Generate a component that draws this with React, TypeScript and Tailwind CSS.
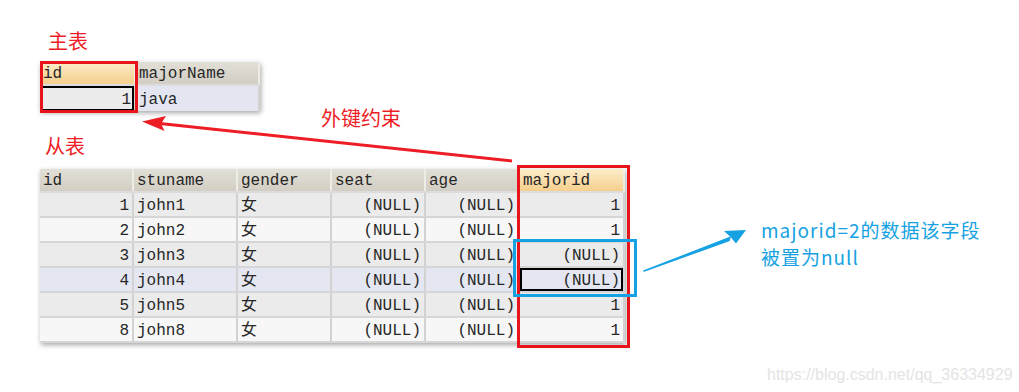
import { ReactElement } from 'react'

const mono = 'font-["Liberation_Mono","Noto_Sans_CJK_SC",monospace]'
const cjk = 'font-["Noto_Sans_CJK_SC","Noto_Sans",sans-serif]'

interface Student {
  id: number
  name: string
  majorid: string
}

const students: Student[] = [
  { id: 1, name: 'john1', majorid: '1' },
  { id: 2, name: 'john2', majorid: '1' },
  { id: 3, name: 'john3', majorid: '(NULL)' },
  { id: 4, name: 'john4', majorid: '(NULL)' },
  { id: 5, name: 'john5', majorid: '1' },
  { id: 8, name: 'john8', majorid: '1' }
]

const headCell = 'h-full flex items-center pt-[2px] px-[3px] border-r-2 border-[#eeece6] bg-gradient-to-b from-[#e2dfd6] to-[#d2cec4]'
const headCellHot = 'h-full flex items-center pt-[2px] px-[3px] border-r-2 border-[#eeece6] bg-gradient-to-b from-[#fcecca] to-[#f6cf8c]'
const cell = 'h-full flex items-center pt-[2px] px-[3px] border-r-2 border-[#d2d2d2]'

function MasterTable(): ReactElement {
  return (
    <div className="relative w-[220px] shadow-[1px_2px_5px_rgba(0,0,0,0.35)] bg-white">
      <div className="flex h-[24px] border-b-2 border-[#dcdcdc]">
        <div className={`${headCellHot} w-[96px]`}>id</div>
        <div className={`${headCell} w-[124px]`}>majorName</div>
      </div>
      <div className="flex h-[25px] bg-[#e3e6f0]">
        <div className={`${cell} w-[96px] justify-end bg-[#ececec] shadow-[inset_0_0_0_2px_#000]`}>1</div>
        <div className={`${cell} w-[124px]`}>java</div>
      </div>
      {/* highlighted primary key column */}
      <div className="absolute left-0 top-[-1px] w-[98px] h-[52px] border-[3px] border-[#e8141c]" />
    </div>
  )
}

function SlaveTable(): ReactElement {
  return (
    <div className="relative w-[585px] shadow-[1px_2px_5px_rgba(0,0,0,0.35)] bg-white">
      <div className="flex h-[24px] border-b-2 border-[#dcdcdc]">
        <div className={`${headCell} w-[94px]`}>id</div>
        <div className={`${headCell} w-[104px]`}>stuname</div>
        <div className={`${headCell} w-[94px]`}>gender</div>
        <div className={`${headCell} w-[94px]`}>seat</div>
        <div className={`${headCell} w-[94px]`}>age</div>
        <div className={`${headCellHot} w-[105px]`}>majorid</div>
      </div>
      {students.map((s, idx) => {
        const bg = s.id === 4 ? 'bg-[#e4e7f1]' : idx % 2 === 0 ? 'bg-[#ebebeb]' : 'bg-[#f7f7f7]'
        return (
          <div key={s.id} className={`flex h-[25px] border-b-2 border-[#d6d6d6] ${bg}`}>
            <div className={`${cell} w-[94px] justify-end`}>{s.id}</div>
            <div className={`${cell} w-[104px]`}>{s.name}</div>
            <div className={`${cell} w-[94px]`}>女</div>
            <div className={`${cell} w-[94px] justify-end`}>(NULL)</div>
            <div className={`${cell} w-[94px] justify-end`}>(NULL)</div>
            <div className={`${cell} w-[105px] justify-end ${s.id === 4 ? 'shadow-[inset_0_0_0_2px_#000]' : ''}`}>{s.majorid}</div>
          </div>
        )
      })}
      {/* foreign key column */}
      <div className="absolute left-[477px] top-[-4px] w-[113px] h-[183px] border-[3px] border-[#e8141c]" />
      {/* rows set to null */}
      <div className="absolute left-[473px] top-[70px] w-[124px] h-[58px] border-[3px] border-[#16a2e2]" />
    </div>
  )
}

export default function App(): ReactElement {
  return (
    <div className="relative w-[1019px] h-[392px] bg-white overflow-hidden">
      <div className={`flex flex-col pl-[40px] text-[16px] text-[#262626] ${mono}`}>
        <div className={`mt-[27px] ml-[8px] h-[28px] leading-[28px] text-[20px] text-[#ee1c25] ${cjk}`}>主表</div>
        <div className="mt-[7px]">
          <MasterTable />
        </div>
        <div className={`mt-[21px] ml-[5px] h-[28px] leading-[28px] text-[20px] text-[#ee1c25] ${cjk}`}>从表</div>
        <div className="mt-[9px]">
          <SlaveTable />
        </div>
      </div>

      <div className={`absolute left-[761px] top-[216px] flex flex-col text-[19px] leading-[27px] tracking-[1px] text-[#16a2e2] ${cjk}`}>
        <span>majorid=2的数据该字段</span>
        <span>被置为null</span>
      </div>
      <div className={`absolute left-[321px] top-[104px] text-[20px] leading-[28px] text-[#ee1c25] ${cjk}`}>外键约束</div>
      <div className="absolute left-[767px] top-[363px] text-[16px] text-[#e4e4e4] font-['Liberation_Sans',sans-serif]">
        https://blog.csdn.net/qq_36334929
      </div>

      <svg className="absolute inset-0 pointer-events-none" width="1019" height="392" viewBox="0 0 1019 392">
        <line x1="512" y1="161" x2="160" y2="123.5" stroke="#ee1c25" strokeWidth="3" />
        <polygon points="142,121.5 166,116 161,123.8 164.5,131" fill="#ee1c25" />
        <path d="M644 271 L730 237.5 L729 240.5 Z" fill="#16a2e2" stroke="#16a2e2" strokeWidth="1.5" strokeLinejoin="round" />
        <polygon points="746,230 724,231 731,237.5 736,243.5" fill="#16a2e2" />
      </svg>
    </div>
  )
}
